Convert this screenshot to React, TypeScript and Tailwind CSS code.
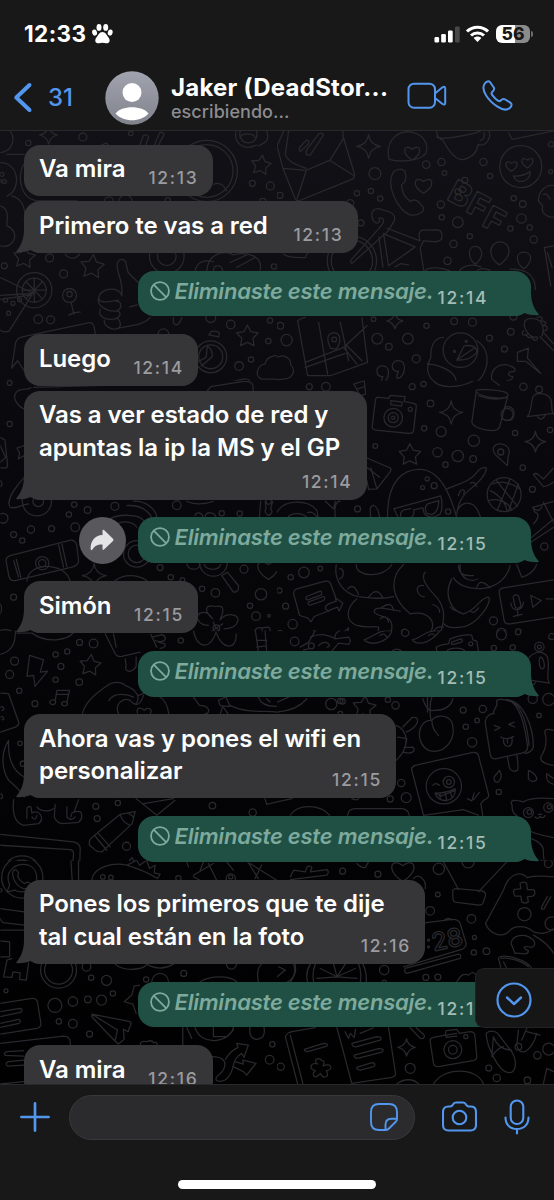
import React from 'react';

type Dot = [number, number, number];

/* ---------- wallpaper doodles ---------- */

const starPath = (x: number, y: number, r: number, turn = 0) => {
  const pts: string[] = [];
  for (let i = 0; i < 10; i++) {
    const a = (Math.PI / 5) * i - Math.PI / 2 + turn;
    const q = i % 2 ? r * 0.52 : r;
    pts.push(`${(x + q * Math.cos(a)).toFixed(1)} ${(y + q * Math.sin(a)).toFixed(1)}`);
  }
  return `M${pts.join('L')}Z`;
};

const sparkPath = (x: number, y: number, r: number) =>
  `M${x} ${y - r}Q${x + 3} ${y - 5} ${x + r} ${y}Q${x + 5} ${y + 5} ${x} ${y + r}Q${x - 4} ${y + 5} ${x - r} ${y}Q${x - 4} ${y - 4} ${x} ${y - r}Z`;

const heartPath = (x: number, y: number, s: number) =>
  `M${x} ${y + s}C${x - 1.6 * s} ${y} ${x - s} ${y - 1.2 * s} ${x} ${y - 0.4 * s}C${x + s} ${y - 1.2 * s} ${x + 1.6 * s} ${y} ${x} ${y + s}Z`;

type Tile = {
  x: number;
  y: number;
  dots: Dot[];
  stars?: [number, number, number, number][];
  sparks?: Dot[];
  hearts?: Dot[];
  lines: string[];
};

const tiles: Tile[] = [
  {
    x: 0,
    y: 130,
    dots: [
      [84, 36, 8], [248, 18, 12], [392, 7, 7], [148, 381, 12], [12, 405, 9], [190, 429, 12], [114, 565, 13],
      [151, 567, 12], [28, 756, 8], [757, 157, 9], [811, 165, 12], [692, 581, 13], [805, 631, 8], [753, 686, 8],
      [717, 706, 13], [822, 407, 8], [810, 569, 8], [788, 212, 10], [620, 120, 92], [620, 120, 79], [632, 678, 48],
      [632, 678, 36], [102, 478, 53], [102, 478, 36], [208, 494, 21], [208, 490, 8], [16, 508, 6], [38, 518, 6],
      [58, 507, 6], [25, 547, 6], [5, 130, 6], [12, 152, 6], [2, 150, 4], [500, 376, 52], [500, 376, 28], [503, 208, 8],
      [326, 212, 14], [376, 212, 20], [632, 560, 15], [490, 610, 16], [745, 10, 26],
    ],
    stars: [[783, 103, 31, 0.15], [276, 408, 37, 0.1], [742, 617, 34, 0], [72, 380, 34, 0.1]],
    sparks: [[145, 12, 27]],
    lines: [
      'M0 65C40 60 45 20 30 0M0 95C60 95 62 180 20 195M20 70H72M0 225C35 235 15 285 20 285C60 300 45 355 0 345M35 195C70 205 78 240 72 270',
      'M418 44L430 14Q440 8 446 18L436 44M462 44L478 6Q488 0 492 10L474 44M300 44L318 36L326 44M70 100C50 140 60 210 120 210H230',
      'M708 0C700 40 735 60 770 42M800 0C810 30 795 35 775 45M720 20C725 5 760 5 765 20M640 160Q665 150 680 180',
      'M0 440L100 488L0 494M0 506L95 492L26 602Q10 606 0 598',
      'M102 442V514M66 478H138M77 452L127 504M127 452L77 504',
      'M213 516L221 550M206 553Q222 542 240 544',
      'M365 495C370 440 345 425 352 395Q362 378 376 392L384 425Q408 450 420 460M365 495C360 465 300 470 296 500C294 520 325 512 355 508M296 500C285 525 325 545 350 540C370 530 362 512 350 512M300 535C290 565 330 570 350 562C365 555 360 542 352 540M312 568C312 590 340 600 355 592C365 585 360 568 352 564M355 592C380 585 430 585 450 560M388 528L412 522',
      'M34 712L46 636Q50 622 66 618L264 576Q280 574 282 590L286 612M34 712L52 690L72 720M60 780C60 760 72 752 90 760M205 780C210 765 250 775 270 770M520 560C516 590 535 590 545 560',
      'M622 645L618 680L596 692M622 645Q640 660 636 678L604 706M626 612L634 602Q652 598 658 606L656 618Z',
      'M785 745C760 735 775 700 795 700C800 675 831 670 840 680M785 745H831M630 780L640 765L730 745Q750 742 755 760L758 780',
      'M585 420C590 395 610 385 640 392M620 420C625 360 680 360 700 372C750 360 790 380 780 418M690 395L740 372M710 410L765 380M640 420C640 400 665 400 668 420M195 370Q215 395 238 370',
    ],
  },
  {
    x: 277,
    y: 130,
    dots: [
      [294, 128, 18], [448, 101, 11], [494, 93, 11], [503, 126, 7], [620, 93, 11], [640, 135, 8], [240, 187, 8],
      [282, 180, 8], [310, 203, 8], [220, 217, 11], [9, 193, 9], [252, 276, 9], [492, 221, 11], [495, 259, 8],
      [543, 274, 16], [530, 339, 11], [579, 316, 8], [512, 390, 11], [711, 202, 8], [738, 219, 10], [734, 263, 14],
      [701, 293, 8], [759, 290, 8], [771, 326, 11], [732, 107, 63], [823, 40, 8], [822, 122, 6], [10, 585, 10],
      [29, 628, 17], [301, 624, 16], [336, 648, 10], [393, 624, 16], [418, 684, 12], [449, 585, 8], [532, 571, 10],
      [587, 574, 12], [638, 622, 9], [683, 655, 9], [702, 603, 10], [710, 558, 10], [97, 769, 9], [147, 769, 13],
      [406, 770, 8], [440, 760, 8], [740, 769, 9], [784, 778, 11], [290, 565, 7], [172, 626, 7],
      [564, 148, 9], [544, 182, 9], [533, 662, 3], [568, 632, 3], [225, 390, 74], [225, 390, 62], [551, 658, 52],
    ],
    sparks: [[275, 46, 36], [354, 570, 24]],
    hearts: [[406, 64, 23], [440, 162, 25], [704, 104, 17], [752, 94, 17]],
    lines: [
      'M20 0L0 45L18 112L55 205Q60 212 70 208L230 143L233 130L198 15V0M18 112L88 118L158 88L233 135M88 118L60 205M35 0L25 70Q32 95 88 112M200 22L160 86M70 62Q62 55 72 45L88 28Q98 26 95 38ZM90 72Q84 66 92 52L126 8Q138 4 140 12L100 72Z',
      'M337 85C325 40 350 5 392 2C440 5 458 40 446 68C430 90 370 95 337 85',
      'M480 0Q478 18 500 30Q530 88 560 86Q600 75 604 40M480 18C490 30 590 10 612 0M604 40C630 50 645 15 636 0M610 28Q625 25 622 5M696 6L706 25L831 0',
      'M710 135Q735 138 760 122C765 150 720 165 710 135M785 210C785 180 808 160 831 164M785 210L798 225C790 250 820 262 831 258M800 190Q812 185 820 205',
      'M350 122Q370 108 384 120C390 140 385 155 374 162Q375 195 402 212Q415 198 436 225C450 240 425 256 400 252C360 235 325 160 350 122Z',
      'M290 270C275 240 295 225 320 238Q360 245 352 270L334 300L228 395Q220 402 222 388L308 290C325 275 322 256 306 262C312 275 300 282 290 270ZM330 292L430 330Q422 305 434 298L482 297Q500 300 494 325C480 340 460 328 440 330L430 352L441 420M320 308L335 405L415 348L335 315ZM318 408L306 318M355 408L372 398L395 402',
      'M20 370Q35 382 85 380L92 366',
      'M578 365C580 340 612 340 615 368C615 385 602 394 596 400C586 394 578 385 578 365ZM642 360C645 322 698 325 697 362C695 380 680 394 668 402C655 394 642 380 642 360ZM722 380C724 358 760 358 762 382C760 395 750 408 742 414C732 408 722 395 722 380ZM548 420C560 400 595 400 612 408M445 420C455 405 500 412 520 420M600 420C610 410 625 412 640 418M700 415C760 415 775 440 776 476',
      'M803 350L831 345M803 350L822 465M812 365L826 410M790 618L831 660M800 605L831 640',
      'M62 570L92 735L160 735L272 695L255 560M62 570Q70 562 85 560M125 575L152 730M190 575L215 690M85 695L200 650L270 585M85 710L205 668M200 650L240 700M210 645L255 690M160 652C145 620 155 605 172 606C195 608 192 635 178 655ZM0 680C25 665 45 690 40 700C60 720 45 745 20 745L0 747',
      'M300 720C300 700 335 700 335 725C335 742 325 755 315 758Q310 755 318 738C305 738 300 730 300 720ZM346 705C350 682 382 685 383 710C383 727 374 742 362 743Q356 738 365 722C352 722 346 715 346 705Z',
      'M500 620C470 620 460 650 462 680C445 710 450 740 480 758C530 780 600 770 620 730C640 690 632 650 600 630M452 700C480 700 540 720 538 755M540 688L562 645Q600 640 600 665Q580 690 540 688L595 650',
      'M722 665L755 652L752 682L792 728L748 692L722 692ZM645 745C640 715 665 700 690 702Q720 710 714 722C690 722 690 735 708 738C710 755 675 745 665 768ZM230 770L262 750L265 780M600 776L660 770',
      'M780 618C760 625 735 590 745 570Q760 555 790 570Q805 590 796 615M740 600C730 610 745 618 750 610C750 625 765 622 764 615C768 632 785 632 782 620M780 562C790 552 800 560 794 570C810 570 810 582 800 584C815 585 815 598 802 600',
    ],
  },
  {
    x: 0,
    y: 380,
    dots: [
      [28, 7, 7], [28, 130, 8], [222, 372, 8], [262, 388, 10], [206, 402, 8], [344, 377, 12], [225, 440, 13],
      [92, 447, 11], [154, 444, 9], [40, 462, 9], [66, 480, 8], [8, 413, 15], [40, 650, 9], [530, 374, 13],
      [665, 398, 8], [719, 399, 8], [480, 561, 9], [512, 590, 8], [547, 598, 7], [606, 625, 8], [646, 637, 13],
      [783, 641, 17], [732, 566, 12], [768, 707, 13], [750, 676, 8], [807, 706, 4], [126, 548, 20], [126, 548, 11],
      [110, 362, 44], [114, 362, 16], [410, 520, 40], [410, 520, 26], [640, 545, 42], [649, 743, 10], [806, 363, 8],
    ],
    sparks: [[282, 585, 36]],
    hearts: [[805, 565, 32]],
    lines: [
      'M72 85C50 75 35 50 48 35C60 20 85 30 92 20M100 20L310 14M175 20L172 8M620 32L632 18L730 2Q752 0 758 12L760 32',
      'M0 170L14 178L22 255Q20 264 10 262L0 262M0 195L16 230L0 245M72 195L50 202L58 218L54 235L72 225M0 300C8 305 5 318 0 318',
      'M72 290C40 325 20 360 28 378C40 390 60 372 85 370M85 330L95 345L65 355',
      'M400 362C440 360 470 390 470 412M380 375C420 372 445 390 455 412M325 418C350 398 420 400 430 420M350 430C370 418 400 425 410 440',
      'M18 545Q14 530 30 525L205 480Q225 475 230 495L235 540Q235 555 215 560L45 600Q30 602 26 588ZM40 540L55 590M48 536L62 592M175 492L190 560M185 490L200 558M80 602C80 570 115 555 150 558Q200 565 210 602M345 600C370 580 410 580 440 600',
      'M665 585L700 635Q718 635 715 615L682 575ZM560 550C565 570 595 572 600 552M612 552C620 570 655 572 662 552M585 405C590 392 605 395 608 408M615 408C618 392 645 392 648 412M560 362C580 372 615 372 640 362',
      'M778 410L782 362M796 362L798 385Q790 395 806 405Q822 395 812 385L818 362',
      'M625 735C600 735 580 710 600 698C620 690 630 705 638 715C610 690 615 670 645 678C680 670 668 700 660 718C680 695 715 700 714 720C710 740 690 745 672 745M648 742L628 760M650 742L665 765M648 744L640 725M650 742L668 730M765 750Q770 740 785 742L805 740Q812 742 810 755L805 770M765 750L768 772M785 742L790 768M0 750Q30 740 45 765M0 700C5 690 5 680 0 670',
    ],
  },
  {
    x: 277,
    y: 380,
    dots: [
      [97, 18, 9], [147, 18, 13], [406, 18, 9], [440, 10, 8], [461, 68, 10], [442, 143, 8], [493, 153, 15], [295, 196, 7],
      [482, 215, 14], [543, 226, 17], [589, 235, 10], [506, 252, 8], [591, 180, 17], [740, 18, 11], [715, 157, 8],
      [820, 148, 8], [738, 261, 8], [767, 326, 9], [803, 498, 11], [242, 385, 9], [514, 393, 8], [81, 576, 16],
      [130, 564, 7], [41, 590, 8], [7, 630, 8], [26, 677, 9], [47, 731, 14], [9, 758, 8], [650, 721, 12], [674, 760, 16],
      [725, 753, 8], [383, 757, 11], [349, 111, 28], [349, 111, 15], [400, 86, 6], [682, 342, 51], [672, 214, 9],
      [691, 101, 18], [451, 295, 6], [472, 315, 9], [437, 321, 6], [787, 26, 10], [349, 111, 5],
    ],
    stars: [[399, 223, 34, 0]],
    sparks: [[523, 95, 35], [776, 183, 31]],
    lines: [
      'M296 55Q298 48 308 50L335 53L340 44L385 48L382 62L410 68Q420 70 418 80L410 150Q408 160 396 158L296 148Q284 146 286 135ZM342 60L376 64L374 76L342 72Z',
      'M598 30C600 22 692 28 694 42C692 62 600 50 598 30ZM598 34L585 125C590 145 660 160 668 140L692 50M604 45Q650 62 690 50M685 80C708 70 715 95 710 108C705 122 688 122 676 114',
      'M752 108C765 90 762 70 768 50C775 32 812 36 822 55C828 75 822 90 831 102M752 108L831 98M782 108Q795 125 806 102M470 0C490 25 550 22 590 0M650 0L668 14M230 10L262 0M232 12L250 45L266 40L262 0M240 25L262 18',
      'M656 222C640 200 655 188 675 190C700 195 700 215 694 228L692 255ZM648 310C670 300 700 305 730 325M636 360C670 350 700 370 705 390M660 300C680 330 720 370 722 378M640 330C665 340 690 370 690 392M700 295L662 388M725 310L695 392M770 282Q775 275 785 282L800 295L831 262M770 282L800 318Q810 318 831 305',
      'M270 232L340 262Q345 268 338 276L300 325L275 326L270 300M268 258L308 290M282 262L300 325',
      'M332 412C330 300 380 265 430 266C490 268 520 340 540 412M350 385L492 346Q500 380 490 400Q460 420 442 398L438 382L410 388Q415 405 400 412M365 412Q355 395 352 385M372 408Q368 395 380 388L402 384M450 398Q440 380 452 370L486 360Q485 395 465 402ZM510 325C540 310 580 305 600 275Q615 258 628 262C630 280 600 310 575 330Q545 355 540 400M545 345C550 320 570 325 560 340M580 308Q595 300 600 318M540 400C540 370 590 340 612 412M282 412Q275 375 290 374Q305 380 308 412M175 412Q170 360 190 362M0 395C20 355 95 355 120 390L124 412M32 412C40 395 80 395 90 412M92 396Q105 390 120 408M145 362L170 385L175 362',
      'M768 380L831 362M768 380C780 395 795 390 796 372M768 380L775 395C790 400 785 415 770 430M762 485L831 440M765 470L831 415M800 365L831 425',
      'M50 640Q50 628 60 625L145 602Q158 600 162 612L176 650M50 640L68 705L92 712L102 724L112 708L158 690M88 648L130 632Q138 634 132 644L92 658Q84 656 88 648ZM95 664L140 648Q148 650 140 660L100 674Q90 672 95 664ZM148 688Q140 678 155 670L178 662L175 652L198 668L186 692L182 680L160 688Q158 695 148 688Z',
      'M178 552C170 600 200 640 245 648C300 655 320 655 350 648M188 565C200 560 205 590 188 595M212 625Q230 605 245 642M275 650Q300 615 318 652M238 552C235 590 320 595 345 552M380 552C330 600 350 660 400 700C450 690 490 720 452 770M445 575C430 590 450 620 470 640C500 670 510 700 490 760M440 615C410 610 420 650 442 648M468 672Q490 680 488 695M470 752Q480 735 500 740M240 655C210 680 200 720 240 735C280 745 280 735 305 740C310 765 270 772 260 778M292 695C290 670 350 690 370 692M292 695C310 715 345 700 345 740C345 765 325 765 320 778M315 680Q345 660 350 690M310 715Q330 700 335 725M550 552C545 600 590 605 602 595M530 592C560 640 680 640 700 555M525 595C500 640 520 690 560 700C600 690 610 650 635 650C650 660 600 740 550 740C520 745 505 735 500 730M520 680Q530 690 540 692M580 690Q590 705 605 682M600 620Q610 590 640 622M545 555Q545 590 590 585',
      'M668 640Q664 625 680 622L831 598M668 640L682 720Q684 732 700 730L831 710M710 655C705 640 725 640 727 652L732 672C734 685 716 688 714 675ZM702 668C705 695 738 695 740 665M723 692V706M710 708L736 702M762 645L794 660L768 680ZM808 655H831M720 552L735 590Q770 580 780 552',
      'M95 778L110 750L130 760L190 765L215 742L210 778M520 760L560 768L590 760L600 778',
    ],
  },
  {
    x: 0,
    y: 630,
    dots: [
      [238, 36, 9], [280, 39, 13], [166, 72, 8], [201, 63, 8], [43, 92, 12], [182, 108, 9], [166, 148, 8], [28, 132, 12],
      [237, 155, 10], [57, 181, 8], [104, 220, 9], [542, 30, 8], [59, 339, 7], [0, 498, 7], [287, 528, 9], [353, 518, 8],
      [291, 565, 9], [379, 648, 12], [637, 526, 10], [758, 547, 11], [65, 740, 50], [65, 740, 63], [68, 400, 8],
    ],
    stars: [[270, 105, 33, 0.1]],
    lines: [
      'M88 75L130 88L120 125L142 122L104 168L100 135L80 138ZM0 72Q48 60 45 0M95 8C140 40 200 30 220 6M50 8H95M315 10L345 70Q350 80 365 78L420 65M340 10L348 50M452 12L470 50M455 20L480 14Q490 10 495 20C500 35 475 35 466 30M475 35L494 40Q500 50 480 54M580 0C590 55 630 60 648 5C665 60 712 60 708 10M766 0L775 62M795 0L800 62M770 30H800M770 50L798 46M375 85L378 105C370 125 395 130 408 108V80',
      'M165 210L170 180L208 180L200 215M170 192L205 192M165 210C150 205 142 218 155 222C165 225 168 215 165 210M200 215C185 210 178 222 190 226C200 228 204 222 200 215M246 255C250 220 290 185 330 160Q360 150 375 165C415 180 420 205 408 218M326 210C345 180 390 195 400 200M356 252C340 220 370 200 390 210Q415 240 430 195M415 195C450 180 500 190 506 252M412 248C405 225 432 235 432 240C440 230 460 232 450 252M580 200L598 225C630 225 635 250 610 252M655 210Q675 200 678 200L690 228Q670 228 660 225ZM668 228L660 252M668 228L685 252M690 225C740 250 800 240 831 245M775 200Q785 230 831 228M800 205L810 215',
      'M0 188L25 190L55 275Q58 285 45 290L0 305M0 230C10 225 15 240 5 240M0 260C10 255 15 270 5 268',
      'M25 330C5 360 0 410 25 450Q60 480 72 500M25 330C22 380 35 420 72 440M40 508C35 560 50 580 70 585L115 580Q130 570 120 552Q110 540 95 548L92 530Q78 525 80 545V565M95 560Q105 575 110 555M110 530C120 545 150 545 160 535M165 522L162 560Q170 580 190 580L235 576Q250 565 242 545Q230 540 215 548L212 560M200 530V560Q215 575 225 560M235 508L222 545',
      'M268 645Q265 630 275 622L360 552L405 544L396 580L305 665Q290 665 280 655ZM285 618L320 660M295 610L330 650M360 552Q365 575 390 585M385 548L400 560M408 505L470 555L525 510M430 520L520 505',
      'M0 612L220 635Q240 640 240 655L238 720M0 645L210 658Q220 660 220 670L216 720M285 710L340 700M350 705L370 696M375 708L395 682L415 710L430 700M795 505L800 522L831 515',
    ],
  },
  {
    x: 277,
    y: 630,
    dots: [
      [53, 33, 13], [103, 46, 9], [385, 7, 11], [674, 13, 15], [724, 5, 8], [708, 51, 8], [651, 53, 8], [825, 18, 9],
      [788, 49, 14], [788, 49, 6], [163, 221, 17], [197, 213, 8], [333, 208, 8], [356, 225, 11], [559, 239, 9],
      [567, 289, 8], [601, 270, 7], [618, 236, 11], [586, 336, 14], [787, 255, 7], [816, 207, 18], [768, 205, 14],
      [373, 458, 11], [388, 502, 15], [340, 506, 9], [666, 485, 8], [501, 468, 53], [516, 455, 17], [516, 455, 7],
      [755, 547, 15], [758, 545, 7], [815, 532, 14], [818, 530, 6], [190, 212, 8], [582, 40, 6], [486, 716, 18],
      [95, 720, 12], [190, 250, 7],
    ],
    stars: [[262, 232, 36, 0.1]],
    lines: [
      'M70 50L95 35L115 0M100 20C130 5 160 15 175 25L215 20Q225 30 215 42L185 38L165 62M125 45Q140 30 155 40Q162 48 150 50M95 55L80 58M175 25Q170 10 190 0M262 28C300 15 295 0 345 0C340 25 300 50 265 32ZM406 28C440 20 440 0 490 0C470 30 430 48 410 32ZM310 15Q320 5 330 20M455 15Q465 5 475 15M345 62Q360 50 375 62',
      'M480 62L478 50Q490 42 515 40L520 25Q560 10 585 14L588 28L600 32L605 62M525 35L552 25Q562 30 552 36L530 42Q520 42 525 35ZM510 62C520 50 555 50 565 62',
      'M745 110C755 60 800 55 812 80C822 110 805 140 818 158L765 150M790 80C800 78 808 110 798 115C788 118 785 90 790 80M760 158Q772 170 778 152',
      'M465 200C455 230 460 250 462 270C420 270 415 340 455 360C510 375 540 320 525 275C510 250 475 255 465 270C465 290 475 305 485 315M452 200V245M438 205Q450 245 470 240Q520 240 528 205M0 245Q60 240 90 205M0 215L35 200',
      'M358 285C395 300 400 350 358 390M378 290L405 262Q425 258 422 275Q415 295 388 305M382 352L408 350Q420 365 395 368L378 365M362 320L390 325M390 325L385 352',
      'M660 225Q645 250 652 250Q630 250 625 275L640 370Q642 388 660 385L735 368Q755 365 752 345C745 290 735 250 715 225C700 205 670 205 660 210ZM690 208C740 210 770 290 770 350Q765 365 745 370M688 208C725 210 750 260 757 345M652 285L670 292L654 300M712 275L696 282L714 290M672 320C680 328 700 325 710 318M680 328Q680 348 695 348Q708 345 706 325M692 328V338M692 380L698 412Q705 428 722 420Q726 410 720 372',
      'M831 300Q800 290 805 310Q815 345 792 380Q790 400 831 405M652 440L668 420Q680 440 665 455Q650 458 652 440ZM755 420Q780 430 780 448Q765 460 755 445ZM810 430L831 445M810 430Q805 455 831 462',
      'M405 420Q402 410 415 405L585 367Q600 364 605 375L636 495Q635 505 620 510L612 520L618 555M405 420L440 555M440 555L560 538L605 555M468 465Q475 455 488 465M475 488Q505 490 535 475C540 520 480 520 475 488ZM490 490V505M505 487L510 512M520 482L525 500M572 505L585 512L592 488M590 508L608 486M478 488L490 498L535 480',
      'M706 525C695 505 720 510 740 515Q760 500 831 505M706 525Q705 550 720 555C715 580 750 610 831 622M775 560Q785 570 790 558Q800 568 805 555M785 552L795 552M765 625Q800 640 800 660Q800 690 805 700M795 690C785 700 800 712 815 706C825 705 831 695 831 690M40 555C60 520 130 520 158 555M212 555Q215 535 235 535H375Q395 538 397 555M0 515L45 505M225 505Q240 512 245 505M85 720V708L130 718M245 715L275 696M345 720C350 695 375 705 378 710C390 695 410 700 412 720M665 700L680 715',
    ],
  },
  {
    x: 0,
    y: 860,
    dots: [
      [259, 320, 13], [273, 353, 8], [319, 361, 15], [438, 358, 8], [551, 340, 9], [17, 392, 6], [164, 436, 21],
      [218, 424, 14], [263, 418, 10], [304, 420, 15], [338, 400, 8], [176, 484, 8], [218, 491, 13], [268, 522, 9],
      [535, 54, 8], [809, 599, 13], [817, 553, 8], [66, 52, 62], [175, 330, 54], [175, 330, 42], [308, 50, 7],
      [480, 365, 25], [692, 55, 14], [692, 50, 6], [332, 52, 7], [694, 312, 15], [0, 90, 5],
    ],
    lines: [
      'M20 95L28 75C10 30 50 5 85 15C115 25 120 75 85 90Q60 100 45 90ZM40 30Q48 25 55 38L52 48Q60 65 74 70Q82 60 92 72Q95 88 70 85C50 80 30 50 40 30Z',
      'M212 0L216 60M235 0V60M275 58C280 20 340 5 380 15L410 0L418 15L440 0L448 25L465 15L462 38L480 42L472 55Q430 30 380 15M560 5L565 20M580 50L600 60M580 45L640 10M625 10L650 60M680 5L700 30M740 0L775 55M765 55L785 15M610 5L600 30M750 10L830 60',
      'M0 145L72 155M0 175Q5 190 15 188L72 195M0 210H72M0 242L28 245V290H0M10 350L20 300L35 295M10 350L35 352L38 335L60 338L58 358L78 360L85 308M345 312C370 335 430 330 440 312C470 330 500 325 520 312',
      'M0 430L95 415Q110 414 112 428L122 490Q122 502 110 505L0 522M0 455L60 445Q70 448 62 456L0 470M0 490L55 478Q65 482 56 490L0 502M0 550L190 528Q208 528 210 545V556M70 572L20 575Q8 578 15 586L70 588M70 600L25 605Q12 610 22 618L70 615',
      'M275 462L390 485Q396 490 390 498L384 515L370 508L372 538L355 552Q345 545 275 470ZM275 462L352 510L345 540M418 375L402 378L395 405L372 425L398 432L408 460M600 365C630 345 690 345 710 365M775 365C770 340 775 320 785 312M420 556Q420 540 440 545Q455 538 460 548Q475 545 470 556M548 502V556M560 502L575 535M585 502C600 560 690 550 700 502M640 502V530H680L700 510M750 502Q745 535 770 538Q798 535 792 502',
      'M635 590C670 590 680 605 672 625C665 645 640 648 650 662C680 672 695 640 700 615C705 595 712 588 725 580L732 592L745 555L710 550L714 562C690 572 682 590 676 598M700 620L730 635L740 645L768 610L728 600L730 612L705 605M0 672L70 665M0 685L70 680',
    ],
  },
  {
    x: 277,
    y: 860,
    dots: [
      [197, 33, 9], [303, 42, 9], [486, 26, 17], [483, 103, 7], [460, 152, 13], [584, 176, 13], [593, 232, 6],
      [591, 277, 8], [629, 273, 10], [743, 162, 20], [825, 190, 20], [322, 330, 14], [447, 352, 9], [483, 351, 9],
      [400, 625, 15], [636, 624, 9], [660, 654, 11], [752, 661, 10], [725, 560, 10], [782, 586, 11], [816, 567, 18],
      [528, 569, 27], [528, 569, 13], [567, 530, 6], [11, 620, 11], [10, 325, 46], [574, 5, 18], [815, 10, 12],
      [322, 366, 6], [455, 240, 3], [455, 260, 3],
    ],
    hearts: [[378, 30, 34]],
    sparks: [[389, 562, 26]],
    lines: [
      'M40 50L50 30L85 35L90 20Q100 15 105 22L100 35L150 28Q158 35 150 45L40 58M240 10Q255 25 265 22L275 5M410 55C425 35 450 60 445 85',
      'M500 5L545 88M605 95L690 5M528 95Q525 85 540 85L615 92Q630 95 625 110L618 130Q615 136 600 134L535 126Q528 124 528 110Z',
      'M626 190L680 90C700 30 740 35 750 52C780 45 831 50 831 50M626 190C640 225 680 235 700 210C715 195 750 195 770 215C800 225 820 215 831 205M712 88L732 85L730 70Q740 62 750 70L752 88L770 88Q780 98 768 108L752 110L755 125Q745 132 735 125L732 108L715 108Q708 98 712 88ZM812 108L795 140Q790 150 802 146L822 110',
      'M703 250C705 225 745 215 770 240Q780 255 765 262C740 255 735 262 755 272C755 290 720 275 715 280ZM770 225Q815 250 831 280M672 322L665 295C670 275 755 300 765 325M672 295C700 290 740 305 755 320M690 325L680 305',
      'M443 188L520 178Q545 175 550 190L568 250Q568 262 555 268L380 320M500 182Q515 168 525 180M385 325L545 282Q555 285 550 295L390 340Q380 335 385 325M540 365Q555 335 575 345Q590 330 598 345',
      'M92 366C85 340 95 320 100 312M268 366C270 340 262 320 258 312M110 366Q105 335 115 312M250 366Q255 335 245 312M180 350L130 325M180 350L170 312M180 350L205 312M180 350L235 325M180 350L120 355M180 350L240 355M0 350L25 330L5 320M50 312Q60 340 40 366',
      'M25 530Q30 518 45 515L115 503M25 530L62 672M40 525L78 672M180 503L225 672M335 503L356 640Q356 650 345 652L225 670M82 568L140 550Q155 550 150 558L95 574Q82 576 82 568ZM225 550L300 530Q318 530 310 540L240 560Q225 562 225 550ZM232 585L305 566Q325 566 315 576L245 594Q230 596 232 585ZM240 622L285 608Q300 610 290 620L250 630Q238 630 240 622ZM250 520L290 503M204 515L215 535L220 520L232 532L236 508M400 503L430 535Q445 538 442 525L418 503',
      'M460 545Q458 535 470 532L505 525L508 512L540 508L548 520L580 515Q592 515 594 525L600 590Q600 600 588 602L485 620Q472 620 470 610ZM508 525L540 520M508 525V532L540 528',
      'M628 520C640 510 660 510 670 530L705 575C725 610 715 640 695 638C665 635 630 560 628 520ZM645 590L650 530Q665 570 705 570M645 590Q660 565 680 560M725 510L720 555Q725 580 745 575Q770 560 780 520M735 540L750 505M750 515L790 525M470 672C500 620 600 620 620 672M360 672C380 655 410 655 425 672M800 672L810 625L831 635',
      'M122 612C105 600 125 590 135 602C145 600 140 615 138 618C165 605 170 630 148 632C160 650 140 660 130 640C115 660 100 645 115 632C90 625 105 605 122 612Z',
    ],
  },
];

const Wallpaper = () => (
  <svg className="absolute inset-0 h-full w-full" viewBox="0 130 554 954" fill="none" stroke="currentColor" strokeLinecap="round" strokeLinejoin="round" aria-hidden="true">
    <defs>
      {tiles.map((t, i) => (
        <clipPath id={`tile${i}`} key={i}>
          <rect x="0" y="0" width="831" height={i < 2 ? 750 : i < 4 ? 752 : i < 6 ? 692 : 690} />
        </clipPath>
      ))}
    </defs>
    {tiles.map((t, i) => (
      <g key={i} transform={`translate(${t.x} ${t.y}) scale(.33333)`} strokeWidth="3.8">
        <g clipPath={`url(#tile${i})`}>
          {t.dots.map(([x, y, r], k) => (
            <circle key={k} cx={x} cy={y} r={r} />
          ))}
          {t.stars?.map(([x, y, r, a], k) => <path key={k} d={starPath(x, y, r, a)} />)}
          {t.sparks?.map(([x, y, r], k) => <path key={k} d={sparkPath(x, y, r)} />)}
          {t.hearts?.map(([x, y, s], k) => <path key={k} d={heartPath(x, y, s)} />)}
          {t.lines.map((d, k) => (
            <path key={k} d={d} />
          ))}
        </g>
      </g>
    ))}
    <g fontFamily="Inter, sans-serif" fontWeight="800" strokeWidth="1.2">
      <text x="446" y="198" fontSize="32" transform="rotate(28 446 198)">B</text>
      <text x="465" y="210" fontSize="32" transform="rotate(28 465 210)">F</text>
      <text x="481" y="224" fontSize="32" transform="rotate(28 481 224)">F</text>
      <text x="434" y="951" fontSize="25" fontWeight="500" transform="rotate(-12 434 951)">28</text>
    </g>
  </svg>
);

/* ---------- message bubbles ---------- */

const LeftTail = () => (
  <svg className="absolute bottom-0 -left-2 h-[24px] w-[24px] text-[#363638]" viewBox="0 0 24 24" fill="currentColor" aria-hidden="true">
    <path d="M8 0C8 9 5.500 16.500 .5 22Q-.2 23.200 1 23.200C6 23.300 11 22.800 14.500 21Q19 24 24 24V0Z" />
  </svg>
);

const RightTail = () => (
  <svg className="absolute -right-2 bottom-0 h-[24px] w-[24px] text-[#205044]" viewBox="0 0 24 24" fill="currentColor" aria-hidden="true">
    <path d="M16 0C16 9 18.500 16.500 23.500 22Q24.200 23.200 23 23.200C18 23.300 13 22.800 9.500 21Q5 24 0 24V0Z" />
  </svg>
);

const Incoming = ({ lines, time, box, tail }: { lines: string[]; time: string; box: string; tail?: boolean }) => (
  <div className={`relative ml-6 flex shrink-0 flex-col justify-between rounded-[16px] bg-[#363638] pt-[8.500px] pr-[14px] pb-2 pl-[15px] ${box}`}>
    {tail && <LeftTail />}
    <div className="relative text-[24px] leading-[32.5px] font-semibold tracking-[-0.08px] whitespace-nowrap text-white">
      {lines.map((l) => (
        <div key={l}>{l}</div>
      ))}
    </div>
    <span className="relative -mt-5 self-end text-[17.500px] leading-5 font-medium tracking-[1.700px] text-[#9b9ba0]">{time}</span>
  </div>
);

const Outgoing = ({ time, box, forward }: { time: string; box: string; forward?: boolean }) => (
  <div className={`mr-[23.500px] flex shrink-0 items-center justify-end gap-[12.500px] ${box}`}>
    {forward && (
      <span className="flex size-[47px] shrink-0 items-center justify-center rounded-full bg-[#59595d]">
        <svg className="h-[22px] w-[24px] text-[#e4e4e6]" viewBox="0 0 24 22" fill="currentColor" aria-hidden="true">
          <path d="M12.500 1.700Q12.500 0 14 1L23 9.800Q24 11 23 12L14 20.600Q12.500 21.600 12.500 20V15.600C7 15.500 4.500 17.500 2.400 20.600Q.8 22 .6 19.800C.5 12.500 4.500 6.300 12.500 6.100Z" />
        </svg>
      </span>
    )}
    <div className="relative flex h-[45.500px] w-[392.500px] items-start rounded-[16px] bg-[#205044] pl-[11.500px]">
      <RightTail />
      <svg className="mt-[10px] size-[20px] shrink-0 text-[#7eaa9d]" viewBox="0 0 19 19" fill="none" stroke="currentColor" strokeWidth="1.700" aria-hidden="true">
        <circle cx="9.500" cy="9.500" r="8.500" />
        <path d="M3.500 3.500L15.500 15.500" />
      </svg>
      <span className="mt-[5px] ml-[5px] w-[263px] shrink-0 text-[22px] leading-[30px] font-semibold tracking-[-0.220px] whitespace-nowrap text-[#7eaa9d] italic">
        Eliminaste este mensaje.
      </span>
      <span className="relative mt-[17px] text-[17.500px] leading-5 font-medium tracking-[1.700px] text-[#a3bdb6]">{time}</span>
    </div>
  </div>
);

/* ---------- header ---------- */

const StatusBar = () => (
  <div className="flex h-[50px] items-start justify-between pr-[21px] pl-6">
    <div className="flex items-center gap-[6px] pt-5">
      <span className="text-[22.500px] leading-7 font-bold tracking-[0.400px] text-white">12:33</span>
      <svg className="h-[20px] w-[21px] text-white" viewBox="0 0 21 20" fill="currentColor" aria-hidden="true">
        <ellipse cx="7" cy="3.400" rx="2.500" ry="3.400" />
        <ellipse cx="13.700" cy="3.400" rx="2.500" ry="3.400" />
        <ellipse cx="2.600" cy="8.600" rx="2.400" ry="3.100" transform="rotate(-15 2.600 8.600)" />
        <ellipse cx="18.200" cy="8.600" rx="2.400" ry="3.100" transform="rotate(15 18.200 8.600)" />
        <path d="M10.400 8C13.500 8 14.500 11 16.300 13.200C19 16.300 17.300 19.800 14 19.300Q10.400 18.400 7 19.300C3.500 19.800 2 16.300 4.600 13.200C6.400 11 7.400 8 10.400 8Z" />
      </svg>
    </div>
    <div className="flex items-center pt-[25px]">
      <svg className="mr-[-1px] h-[17px] w-[26px]" viewBox="0 0 26 17" aria-hidden="true">
        <g fill="#fff">
          <rect x="0.500" y="11" width="4.600" height="5.500" rx="1.300" />
          <rect x="7.200" y="8" width="4.700" height="8.500" rx="1.300" />
          <rect x="14" y="4.500" width="4.700" height="12" rx="1.300" />
        </g>
        <rect x="21" y="0.500" width="4.700" height="16" rx="1.300" fill="#48484a" />
      </svg>
      <svg className="ml-[7px] h-[18px] w-[23px]" viewBox="0 0 23 18" fill="none" stroke="#fff" strokeWidth="3" aria-hidden="true">
        <path d="M1 6.400C6.800 .7 16.200 .7 22 6.400" />
        <path d="M5 10.500C8.600 7 14.400 7 18 10.500" />
        <path d="M11.500 16.900L7.600 13C9.800 11 13.200 11 15.400 13Z" fill="#fff" stroke="none" />
      </svg>
      <span className="ml-[7px] flex h-[18px] w-[34px] items-center justify-center rounded-[6px] bg-linear-to-r from-white from-55% to-[#8b8b8c] to-55% text-[17.500px] leading-[18px] font-extrabold text-[#181818]">56</span>
      <span className="ml-px h-[6px] w-[2px] rounded-r-full bg-[#6c6c6e]" />
    </div>
  </div>
);

const Header = () => (
  <header className="h-[131px] shrink-0 border-b border-[#29292b] bg-[#181818]">
    <StatusBar />
    <div className="flex h-[80px] items-center pb-0">
      <svg className="mt-[15px] ml-[13px] h-[31px] w-[20px] text-[#5296ee]" viewBox="0 0 20 31" fill="none" stroke="currentColor" strokeWidth="4" strokeLinecap="round" strokeLinejoin="round" aria-hidden="true">
        <path d="M16.500 3L3.300 15.500L16.500 28" />
      </svg>
      <span className="mt-[15px] ml-[15px] w-[57px] text-[24px] font-medium text-[#5296ee]">31</span>
      <svg className="mt-[15px] size-[54px] shrink-0" viewBox="0 0 54 54" aria-hidden="true">
        <defs>
          <linearGradient id="avatar" x1="0" y1="0" x2="0" y2="1">
            <stop offset="0" stopColor="#a1a3ae" />
            <stop offset="1" stopColor="#80828c" />
          </linearGradient>
        </defs>
        <circle cx="27" cy="27" r="26.700" fill="url(#avatar)" />
        <circle cx="27" cy="21.500" r="9.500" fill="#fff" />
        <path d="M10.500 42.500C16 34 38 34 43.500 42.500C36 51.500 18 51.500 10.500 42.500Z" fill="#fff" />
      </svg>
      <div className="mt-[15px] ml-[12px] w-[236px]">
        <div className="text-[24px] leading-7 font-bold tracking-[0.240px] whitespace-nowrap text-white">Jaker (DeadStor...</div>
        <div className="text-[18px] leading-5 font-medium tracking-[0.050px] whitespace-nowrap text-[#8c8c90]">escribiendo...</div>
      </div>
      <svg className="mt-[11px] h-[28px] w-[40px] shrink-0 text-[#5296ee]" viewBox="0 0 40 28" fill="none" stroke="currentColor" strokeWidth="2" strokeLinejoin="round" aria-hidden="true">
        <rect x="1.500" y="1.700" width="26.500" height="24" rx="5.500" />
        <path d="M28 11.500L35.500 5.300Q38.200 4 38.200 6.500V21Q38.200 23.500 35.500 22L28 16" />
      </svg>
      <svg className="mt-[11px] ml-[35px] h-[31px] w-[31px] shrink-0 text-[#5296ee]" viewBox="0 0 31 31" fill="none" stroke="currentColor" strokeWidth="2" strokeLinejoin="round" aria-hidden="true">
        <path d="M2.800 3.500C4.500 1.200 6.500 .6 8.300 2.500L11.800 7.500C13 9.500 11.500 10.800 10 12.200C9.300 13 9.500 14 10.300 15.200C12 17.600 14 19.500 16.200 20.800C17.200 21.300 18 21.300 18.800 20.500C20.200 18.800 21.500 18.400 23.300 19.500L28.300 22.700C30.200 24 29.800 26 28 27.800C25 30.500 20.500 30 15.500 26.700C11 23.800 7 20 4.300 15.800C1.200 11 .6 6.500 2.800 3.500Z" />
      </svg>
    </div>
  </header>
);

/* ---------- composer ---------- */

const Composer = () => (
  <footer className="h-[116px] shrink-0 border-t border-[#29292b] bg-[#181818]">
    <div className="flex h-[65px] items-center text-[#5296ee]">
      <svg className="mb-[2px] ml-[20px] size-[30px] shrink-0" viewBox="0 0 30 30" stroke="currentColor" strokeWidth="2.700" strokeLinecap="round" aria-hidden="true">
        <path d="M15 1.400V28.600M1.400 15H28.600" />
      </svg>
      <div className="ml-[19px] flex h-[45px] w-[346px] shrink-0 items-center justify-end rounded-full border border-[#38383a] bg-[#2b2b2d] pr-4">
        <svg className="mb-px size-[28px]" viewBox="0 0 28 28" fill="none" stroke="currentColor" strokeWidth="1.900" strokeLinejoin="round" aria-hidden="true">
          <path d="M9 1H19Q27 1 27 9V16Q27 17 26 18.500L19.500 25Q17.500 27 16 27H9Q1 27 1 19V9Q1 1 9 1Z" />
          <path d="M15.500 27V21.500Q15.500 15.800 21.500 15.800H27" />
        </svg>
      </div>
      <svg className="mb-[2px] ml-[27px] h-[31px] w-[35px] shrink-0" viewBox="0 0 35 31" fill="none" stroke="currentColor" strokeWidth="2.100" strokeLinejoin="round" aria-hidden="true">
        <path d="M6.500 5.500H8.500Q10 5.300 11 3.500Q12 1.500 14 1.500H21Q23 1.500 24 3.500Q25 5.300 26.500 5.500H28.500Q34 5.500 34 11V24Q34 29.500 28.500 29.500H6.500Q1 29.500 1 24V11Q1 5.500 6.500 5.500Z" />
        <circle cx="17.500" cy="16.500" r="6.800" />
      </svg>
      <svg className="mb-[2px] ml-[27px] h-[36px] w-[26px] shrink-0" viewBox="0 0 26 36" fill="none" stroke="currentColor" strokeWidth="2.100" strokeLinecap="round" aria-hidden="true">
        <rect x="6.700" y="1.500" width="12.600" height="23.500" rx="6.300" />
        <path d="M1.500 18.500C1.500 25.500 6 30 13 30S24.500 25.500 24.500 18.500M13 30V34.500" />
      </svg>
    </div>
    <div className="mx-auto mt-[30px] h-[9px] w-[198px] rounded-full bg-white" />
  </footer>
);

export default function App() {
  return (
    <div className="flex h-[1200px] w-[554px] flex-col overflow-hidden bg-[#181818] font-['Inter','Liberation_Sans',sans-serif]">
      <Header />
      <main className="relative h-[953px] shrink-0 overflow-hidden bg-linear-to-b from-[#111117] via-[#07070a] via-45% to-[#010102] text-[#29292d]">
        <Wallpaper />
        <div className="relative flex h-[953px] flex-col">
          <Incoming lines={['Va mira']} time="12:13" box="mt-[13.500px] h-[51.500px] w-[188.500px]" />
          <Incoming lines={['Primero te vas a red']} time="12:13" box="mt-[5px] h-[51.500px] w-[333.500px]" tail />
          <Outgoing time="12:14" box="mt-[18px]" />
          <Incoming lines={['Luego']} time="12:14" box="mt-[18px] h-[51.500px] w-[174px]" />
          <Incoming lines={['Vas a ver estado de red y', 'apuntas la ip la MS y el GP']} time="12:14" box="mt-[5px] h-[109px] w-[342.500px]" tail />
          <Outgoing time="12:15" box="mt-[17px] h-[47px]" forward />
          <Incoming lines={['Simón']} time="12:15" box="mt-[17.500px] h-[52px] w-[174px]" tail />
          <Outgoing time="12:15" box="mt-[18px]" />
          <Incoming lines={['Ahora vas y pones el wifi en', 'personalizar']} time="12:15" box="mt-[17.500px] h-[84px] w-[372px]" tail />
          <Outgoing time="12:15" box="mt-[18px]" />
          <Incoming lines={['Pones los primeros que te dije', 'tal cual están en la foto']} time="12:16" box="mt-[18px] h-[84px] w-[401px]" tail />
          <Outgoing time="12:16" box="mt-[18px]" />
          <Incoming lines={['Va mira']} time="12:16" box="mt-[18px] h-[51.500px] w-[188.500px]" />
        </div>
        <button className="absolute right-0 bottom-[56px] flex h-[60px] w-[79.500px] items-center rounded-l-[9px] border border-r-0 border-[#222224] bg-[#161617] pl-[20.500px]" aria-label="Ir al final">
          <svg className="mt-[3px] size-[36px] text-[#5296ee]" viewBox="0 0 36 36" fill="none" stroke="currentColor" strokeWidth="2.200" strokeLinecap="round" strokeLinejoin="round" aria-hidden="true">
            <circle cx="18" cy="18" r="16.500" />
            <path d="M11 15.500L18 22L25 15.500" strokeWidth="2.400" />
          </svg>
        </button>
      </main>
      <Composer />
    </div>
  );
}
